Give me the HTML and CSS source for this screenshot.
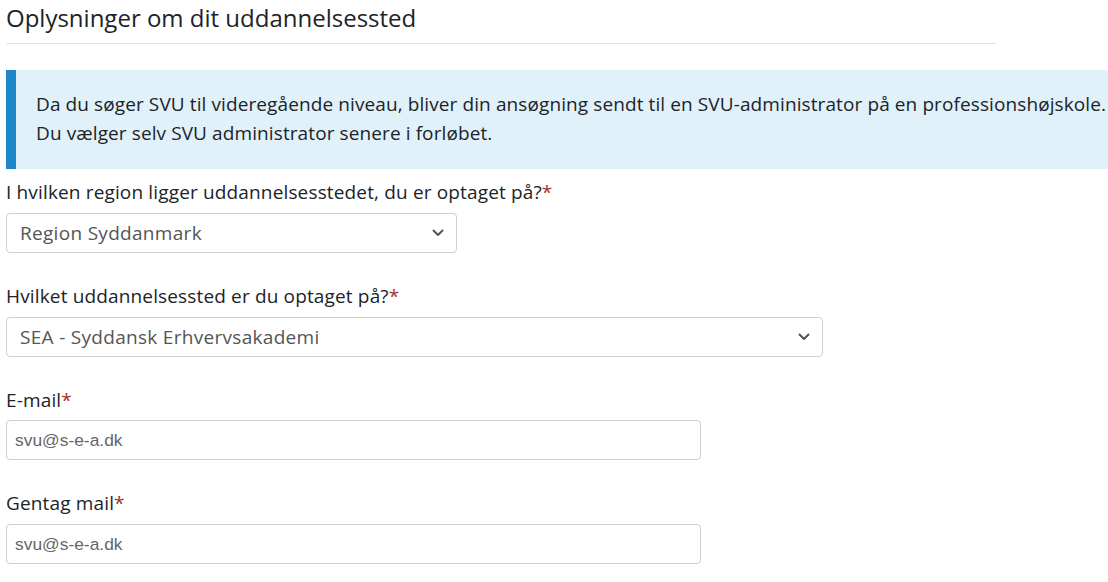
FILE: index.html
```html
<!DOCTYPE html>
<html lang="da">
<head>
<meta charset="utf-8">
<title>Oplysninger om dit uddannelsessted</title>
<link rel="stylesheet" href="styles.css">
</head>
<body>
<main class="page">
  <h2 class="title">Oplysninger om dit uddannelsessted</h2>
  <hr class="rule">
  <div class="callout">
    <p>Da du søger SVU til videregående niveau, bliver din ansøgning sendt til en SVU-administrator på en professionshøjskole.</p>
    <p>Du vælger selv SVU administrator senere i forløbet.</p>
  </div>
  <div class="fields">
    <div class="field">
      <label class="label">I hvilken region ligger uddannelsesstedet, du er optaget på?<span class="req">*</span></label>
      <div class="select select-region">
        <span class="select-value">Region Syddanmark</span>
        <svg class="chev" width="12" height="8" viewBox="0 0 12 8"><path d="M1.5 1.5 L6 6 L10.5 1.5" fill="none" stroke="#555" stroke-width="2" stroke-linecap="round" stroke-linejoin="round"/></svg>
      </div>
    </div>
    <div class="field">
      <label class="label">Hvilket uddannelsessted er du optaget på?<span class="req">*</span></label>
      <div class="select select-school">
        <span class="select-value">SEA - Syddansk Erhvervsakademi</span>
        <svg class="chev" width="12" height="8" viewBox="0 0 12 8"><path d="M1.5 1.5 L6 6 L10.5 1.5" fill="none" stroke="#555" stroke-width="2" stroke-linecap="round" stroke-linejoin="round"/></svg>
      </div>
    </div>
    <div class="field field-tight">
      <label class="label">E-mail<span class="req">*</span></label>
      <div class="input"><span class="input-value">svu@s-e-a.dk</span></div>
    </div>
    <div class="field">
      <label class="label">Gentag mail<span class="req">*</span></label>
      <div class="input"><span class="input-value">svu@s-e-a.dk</span></div>
    </div>
  </div>
</main>
</body>
</html>
```
FILE: styles.css
```css
html, body {
  margin: 0;
  padding: 0;
  background: #fff;
  overflow: hidden;
}
body {
  font-family: "Open Sans", Roboto, sans-serif;
  color: #1c2329;
}
.page {
  width: 990px;
  padding: 0 0 0 6px;
}
.title {
  margin: 0;
  padding-top: 3px;
  font-size: 24px;
  font-weight: 400;
  line-height: 30px;
  height: 31px;
}
.rule {
  margin: 9px 0 0 0;
  border: 0;
  border-top: 1px solid #e2e2e2;
  height: 0;
}
.callout {
  margin: 26px -112px 0 0;
  background: #e0f1fa;
  border-left: 10px solid #1b87c9;
  padding: 20px 0 20px 20px;
  height: 59px;
  font-size: 19px;
  letter-spacing: 0.1px;
  line-height: 29px;
  overflow: hidden;
}
.callout p {
  margin: 0;
  white-space: nowrap;
}
.fields {
  display: flex;
  flex-direction: column;
  gap: 31px;
  margin-top: 11px;
}
.field {
  display: flex;
  flex-direction: column;
  gap: 9px;
}
.field-tight {
  gap: 8px;
}
.label {
  font-size: 19px;
  letter-spacing: 0.15px;
  line-height: 24px;
}
.req {
  color: #a3312a;
}
.select, .input {
  box-sizing: border-box;
  height: 40px;
  border: 1px solid #cfcfcf;
  border-radius: 4px;
  background: #fff;
  display: flex;
  align-items: center;
}
.select {
  justify-content: space-between;
  padding: 0 12px 0 13px;
}
.select-region { width: 451px; }
.select-school { width: 817px; }
.select-value {
  font-size: 19px;
  letter-spacing: 0.3px;
  color: #555;
}
.chev { display: block; }
.input {
  width: 695px;
  padding: 0 8px;
}
.input-value {
  font-family: "Liberation Sans", Arial, sans-serif;
  font-size: 17.4px;
  color: #666;
}
```
